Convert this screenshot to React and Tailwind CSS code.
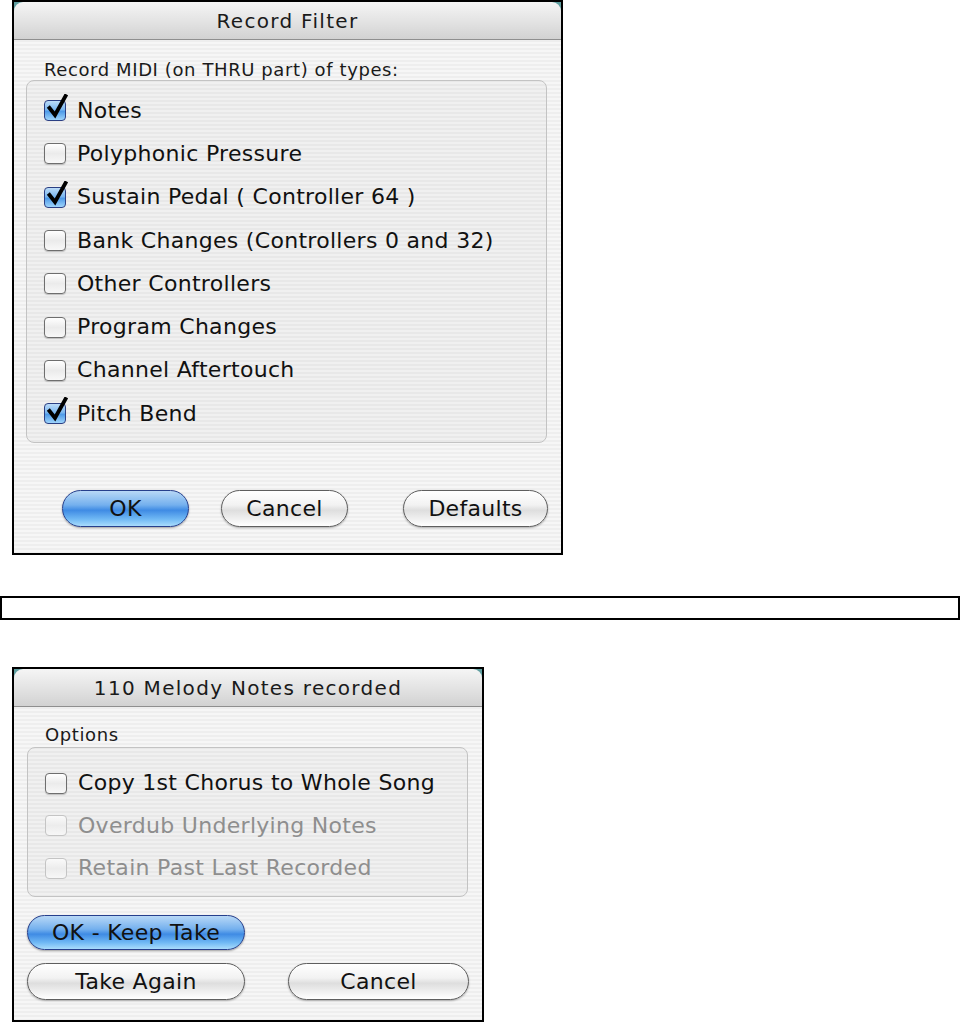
import React from 'react';

const font = "font-['DejaVu_Sans',sans-serif]";
const stripes =
  'bg-[repeating-linear-gradient(180deg,#eeeeee_0px,#eeeeee_2px,#f6f6f6_2px,#f6f6f6_4px)]';

const Checkbox = ({ checked, disabled }) => (
  <span className="relative inline-block w-[22px] h-[21px] shrink-0">
    <span
      className={`absolute inset-0 rounded-[4px] border ${
        checked
          ? 'border-[#2b3f83] bg-[linear-gradient(180deg,#bcdcf8_0%,#7ab6ef_45%,#4f9be8_55%,#9ed4fb_100%)]'
          : disabled
          ? 'border-[#c4c4c4] bg-[linear-gradient(180deg,#fafafa_0%,#ececec_50%,#f7f7f7_100%)]'
          : 'border-[#6e6e6e] bg-[linear-gradient(180deg,#ffffff_0%,#ebebeb_50%,#f8f8f8_100%)] shadow-[0_1px_1px_rgba(0,0,0,0.2)]'
      }`}
    />
    {checked && (
      <svg
        className="absolute left-[2px] top-[-6px]"
        width="22"
        height="25"
        viewBox="0 0 22 25"
      >
        <path
          d="M3.5 14 L9 21 L19.5 2"
          fill="none"
          stroke="#000"
          strokeWidth="3.8"
          strokeLinecap="square"
          strokeLinejoin="miter"
        />
      </svg>
    )}
  </span>
);

const Row = ({ label, checked, disabled, h }) => (
  <div className={`flex items-center ${h}`}>
    <Checkbox checked={checked} disabled={disabled} />
    <span
      className={`ml-[11px] text-[22px] tracking-[0.3px] leading-none ${
        disabled ? 'text-[#8e8e8e]' : 'text-[#111]'
      }`}
    >
      {label}
    </span>
  </div>
);

const Pill = ({ children, primary, w, h = 'h-[37px]' }) => (
  <button
    className={`${w} ${h} rounded-full border flex items-center justify-center text-[22px] tracking-[0.3px] text-[#111] ${
      primary
        ? 'border-[#263f8c] bg-[linear-gradient(180deg,#b8d8f6_0%,#74b0ee_40%,#3f8be4_55%,#6fb8f4_80%,#a9dcfc_100%)] shadow-[0_1px_2px_rgba(0,0,0,0.35)]'
        : 'border-[#5e5e5e] bg-[linear-gradient(180deg,#ffffff_0%,#f2f2f2_40%,#dedede_55%,#f0f0f0_80%,#ffffff_100%)] shadow-[0_1px_2px_rgba(0,0,0,0.3)]'
    }`}
  >
    {children}
  </button>
);

const TitleBar = ({ title }) => (
  <div className="h-[38px] shrink-0 rounded-t-[9px] border-b border-[#8f8f8f] bg-[linear-gradient(180deg,#f5f5f5_0%,#e4e4e4_50%,#d2d2d2_100%)] flex items-center justify-center">
    <span className="text-[20px] tracking-[1.3px] text-[#1a1a1a]">{title}</span>
  </div>
);

const filterItems = [
  ['Notes', true],
  ['Polyphonic Pressure', false],
  ['Sustain Pedal ( Controller 64 )', true],
  ['Bank Changes (Controllers 0 and 32)', false],
  ['Other Controllers', false],
  ['Program Changes', false],
  ['Channel Aftertouch', false],
  ['Pitch Bend', true],
];

export default function App() {
  return (
    <div className={`w-[960px] h-[1022px] bg-white flex flex-col ${font}`}>
      {/* Record Filter dialog */}
      <div className="ml-[12px] w-[551px] h-[555px] border-2 border-black bg-[#5f9ea0] flex flex-col">
        <TitleBar title="Record Filter" />
        <div className={`flex-1 flex flex-col ${stripes}`}>
          <div className="pt-[20px] pl-[30px] leading-[20px] text-[18px] tracking-[0.6px] text-[#1a1a1a]">
            Record MIDI (on THRU part) of types:
          </div>
          <div className="ml-[12px] w-[521px] h-[363px] rounded-[8px] border border-[#c3c3c3] bg-[rgba(0,0,0,0.025)] pt-[8px] pl-[17px]">
            {filterItems.map(([label, checked]) => (
              <Row key={label} label={label} checked={checked} h="h-[43.3px]" />
            ))}
          </div>
          <div className="mt-[47px] flex items-center">
            <div className="ml-[48px]">
              <Pill primary w="w-[127px]">OK</Pill>
            </div>
            <div className="ml-[32px]">
              <Pill w="w-[127px]">Cancel</Pill>
            </div>
            <div className="ml-[55px]">
              <Pill w="w-[145px]">Defaults</Pill>
            </div>
          </div>
        </div>
      </div>

      {/* separator bar */}
      <div className="mt-[41px] w-[960px] h-[24px] border-2 border-black" />

      {/* Melody notes dialog */}
      <div className="mt-[47px] ml-[12px] w-[472px] h-[355px] border-2 border-black bg-[#5f9ea0] flex flex-col">
        <TitleBar title="110 Melody Notes recorded" />
        <div className={`flex-1 flex flex-col ${stripes}`}>
          <div className="pt-[18px] pl-[31px] leading-[20px] text-[18px] tracking-[0.6px] text-[#1a1a1a]">
            Options
          </div>
          <div className="mt-[2px] ml-[13px] w-[441px] h-[150px] rounded-[8px] border border-[#c3c3c3] bg-[rgba(0,0,0,0.025)] pt-[14px] pl-[17px]">
            <Row label="Copy 1st Chorus to Whole Song" h="h-[42.5px]" />
            <Row label="Overdub Underlying Notes" disabled h="h-[42.5px]" />
            <Row label="Retain Past Last Recorded" disabled h="h-[42.5px]" />
          </div>
          <div className="mt-[18px] ml-[13px]">
            <Pill primary w="w-[218px]" h="h-[35px]">OK - Keep Take</Pill>
          </div>
          <div className="mt-[13px] ml-[13px] flex">
            <Pill w="w-[218px]">Take Again</Pill>
            <div className="ml-[43px]">
              <Pill w="w-[181px]">Cancel</Pill>
            </div>
          </div>
        </div>
      </div>
    </div>
  );
}
